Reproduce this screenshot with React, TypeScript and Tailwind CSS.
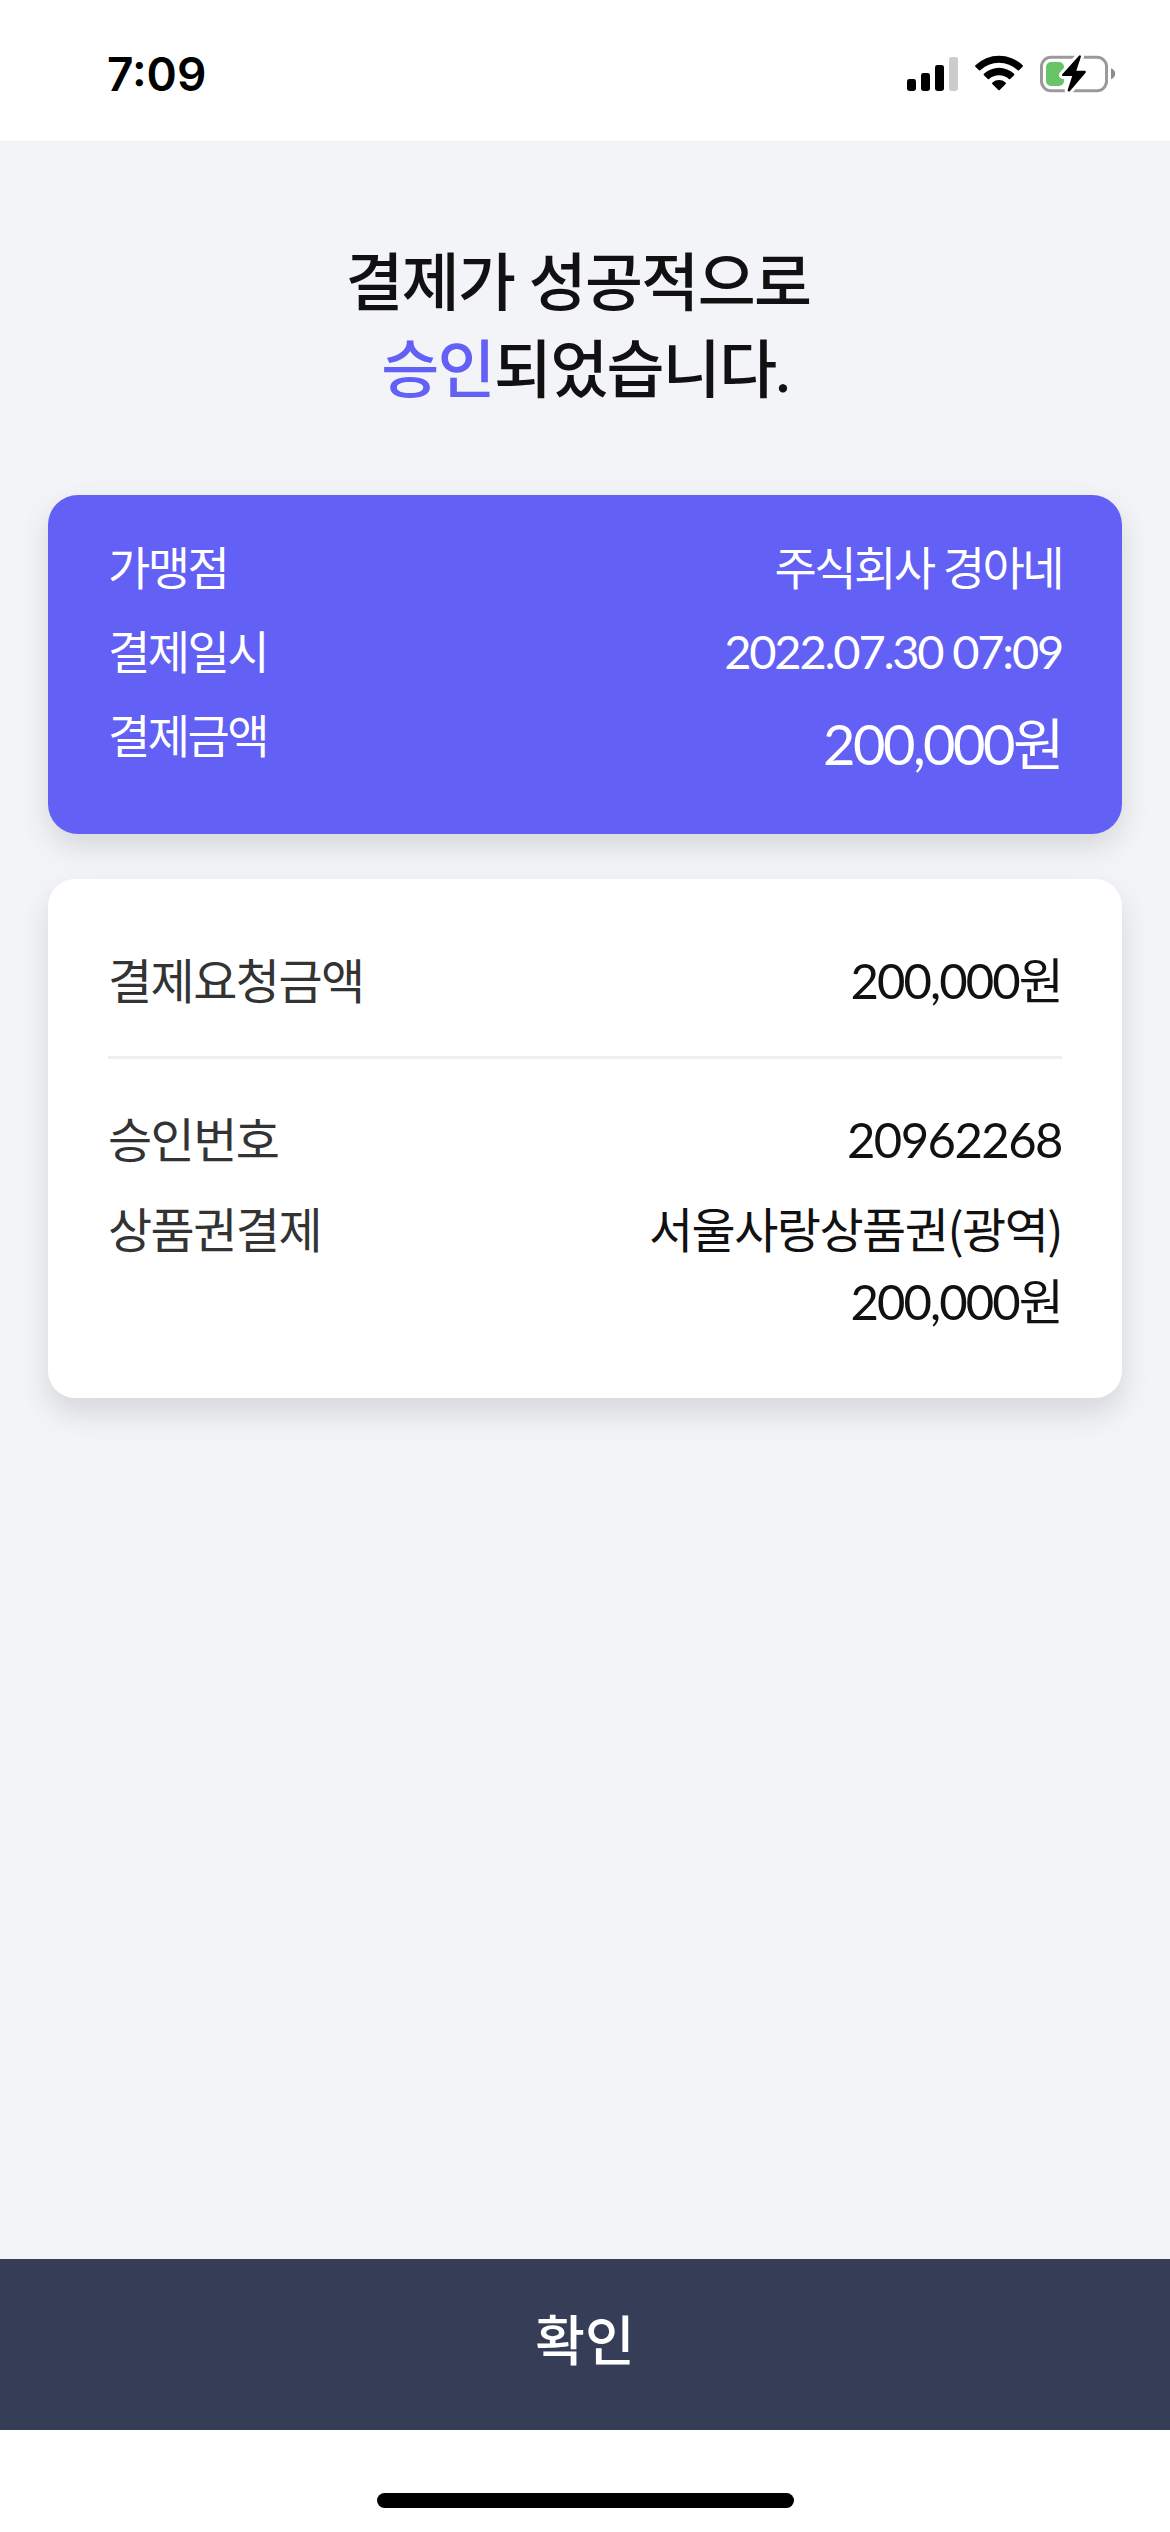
import type { ReactNode } from 'react'
import clsx from 'clsx'

function SignalIcon() {
  return (
    <svg className="h-[34px] w-[51px]" viewBox="0 0 51 34">
      <rect x="0" y="22" width="9" height="12" rx="2.4" />
      <rect x="14" y="16" width="9" height="18" rx="2.4" />
      <rect x="28" y="8" width="9" height="26" rx="2.4" />
      <rect x="42" y="0" width="9" height="34" rx="2.4" fill="#cccccc" />
    </svg>
  )
}

function WifiIcon() {
  return (
    <svg className="h-[36px] w-[48px]" viewBox="0 0 48 36">
      <path d="M0.4 10.2A34 34 0 0 1 47.6 10.2Q48.3 11 47.6 11.7L44 15.2Q43.4 15.8 42.7 15.2A27.4 27.4 0 0 0 5.3 15.2Q4.6 15.8 4 15.2L0.4 11.7Q-0.3 11 0.4 10.2Z" />
      <path d="M8.9 18.8A22.2 22.2 0 0 1 39.1 18.8Q39.8 19.5 39.1 20.2L35.2 24Q34.6 24.6 33.9 24A15 15 0 0 0 14.1 24Q13.4 24.6 12.8 24L8.9 20.2Q8.2 19.5 8.9 18.8Z" />
      <path d="M17.4 27.4A10.6 10.6 0 0 1 30.6 27.4Q31.4 28.1 30.7 28.9L24.7 35Q24 35.7 23.3 35L17.3 28.9Q16.6 28.1 17.4 27.4Z" />
    </svg>
  )
}

function BatteryIcon() {
  const bolt = 'M39.2 0.4L22.3 19.2Q21.3 20.8 23.1 21H32.2L27.6 35.2Q28.1 37.4 29.8 36.2L45.6 17.7Q46.4 16 44.6 15.8H36.3L41 1.5Q40.6 -0.4 39.2 0.4Z'
  return (
    <svg className="h-[38px] w-[76px]" viewBox="0 0 76 38">
      <rect x="1.5" y="2.2" width="65" height="33.6" rx="9.5" fill="none" stroke="#9a9a9a" strokeWidth="3" />
      <path d="M71 13.3Q75.2 15 75.2 18.8T71 24.3Z" fill="#8c8c8c" />
      <rect x="6" y="7" width="18" height="24" rx="5" fill="#68c466" />
      <path d={bolt} fill="#ffffff" stroke="#ffffff" strokeWidth="6" strokeLinejoin="round" />
      <path d={bolt} fill="#000000" />
    </svg>
  )
}

function StatusBar() {
  return (
    <header className="flex h-[141px] shrink-0 justify-between bg-white pr-[54px] pl-[107px] text-black">
      <span className="pt-[46px] font-[Inter] text-[46px] leading-[56px] font-semibold">7:09</span>
      <div className="flex items-start pt-[55px]">
        <div className="mt-[2px] mr-[17px]">
          <SignalIcon />
        </div>
        <div className="mr-[17px]">
          <WifiIcon />
        </div>
        <BatteryIcon />
      </div>
    </header>
  )
}

interface RowProps {
  label: string
  value: ReactNode
  className?: string
  labelClass?: string
  valueClass?: string
}

function Row({ label, value, className, labelClass, valueClass }: RowProps) {
  return (
    <div className={clsx('flex items-start justify-between', className)}>
      <dt className={labelClass}>{label}</dt>
      <dd className={clsx('text-right', valueClass)}>{value}</dd>
    </div>
  )
}

export default function App() {
  return (
    <div className="flex h-[2532px] w-[1170px] flex-col overflow-hidden bg-[#f2f4f8] font-[Lato,'Noto_Sans_CJK_KR',sans-serif] text-[#111111]">
      <StatusBar />

      <main className="flex-1 px-[48px]">
        <h1 className="pt-[96px] text-center text-[63px] leading-[87px] font-medium tracking-[-0.026em]">
          결제가 성공적으로&nbsp;
          <br />
          <span className="text-[#6260f5]">승인</span>되었습니다.
        </h1>

        <dl className="mt-[84px] h-[339px] rounded-[30px] bg-[#6260f5] px-[60px] pt-[31px] text-[46px] leading-[84px] tracking-[-0.056em] text-white shadow-[0_12px_30px_rgba(0,0,0,0.12)]">
          <Row label="가맹점" value="주식회사 경아네" />
          <Row label="결제일시" value="2022.07.30 07:09" valueClass="text-[47px] leading-[83px] tracking-[-0.047em]" />
          <Row label="결제금액" value="200,000원" valueClass="text-[56px] leading-[99px] tracking-[-0.045em]" />
        </dl>

        <dl className="mt-[45px] h-[519px] rounded-[27px] bg-white px-[60px] pt-[66px] text-[48px] leading-[72px] tracking-[-0.032em] shadow-[0_15px_30px_rgba(0,0,0,0.12)]">
          <Row
            label="결제요청금액"
            value="200,000원"
            className="h-[114px] border-b-[3px] border-[#eeeeee]"
            labelClass="text-[#333333]"
            valueClass="text-[49px] leading-[71px] tracking-[-0.039em]"
          />
          <Row
            label="승인번호"
            value="20962268"
            className="mt-[45px] h-[90px]"
            labelClass="text-[#333333]"
            valueClass="text-[49px] leading-[71px]"
          />
          <Row
            label="상품권결제"
            value={
              <>
                <p>
                  서울사랑상품권<span className="font-['Noto_Sans_CJK_KR',sans-serif] leading-none">(광역)</span>
                </p>
                <p className="text-[49px] leading-[71px] tracking-[-0.039em]">200,000원</p>
              </>
            }
            labelClass="text-[#333333]"
          />
        </dl>
      </main>

      <button className="h-[171px] shrink-0 bg-[#363d57] pb-[8px] text-[54px] font-medium text-white">확인</button>

      <footer className="flex h-[102px] shrink-0 justify-center bg-white pt-[63px]">
        <div className="h-[15px] w-[417px] rounded-full bg-black" />
      </footer>
    </div>
  )
}
